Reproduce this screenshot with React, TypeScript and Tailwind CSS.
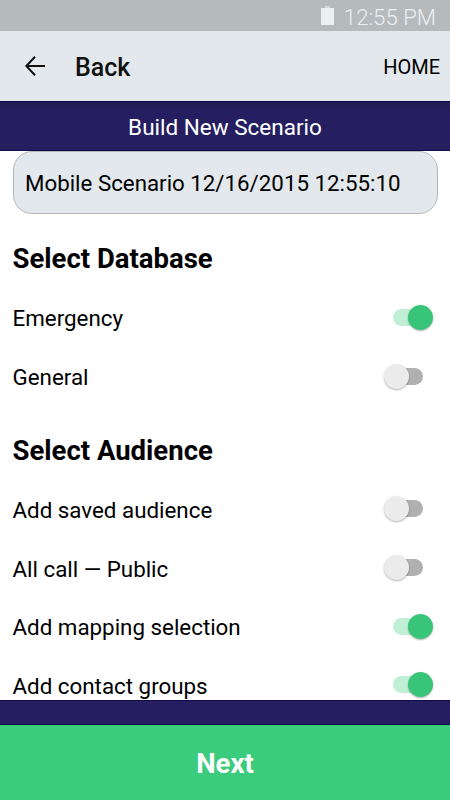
import { useState } from "react";

type ToggleRowProps = {
  label: string;
  defaultOn?: boolean;
};

function ToggleRow({ label, defaultOn = false }: ToggleRowProps) {
  const [on, setOn] = useState(defaultOn);

  return (
    <div className="flex h-[58.7px] shrink-0 items-center justify-between pl-[12.5px] pr-[17px]">
      <span className="text-[22.35px] leading-[26px] text-black">{label}</span>
      <button
        type="button"
        role="switch"
        aria-checked={on}
        aria-label={label}
        className="relative mb-[2px] flex h-[25px] w-[50px] items-center"
        onClick={() => setOn(!on)}
      >
        <span className={`mx-auto h-[17px] w-[30px] rounded-full ${on ? "bg-[#c1efd5]" : "bg-[#b0b0b0]"}`} />
        <span
          className={`absolute top-0 size-[25px] rounded-full shadow-[0_1px_2px_rgba(0,0,0,0.3)] ${
            on ? "right-0 bg-[#39c579]" : "left-[0.5px] bg-[#ebebeb]"
          }`}
        />
      </button>
    </div>
  );
}

export default function App() {
  const [name, setName] = useState("Mobile Scenario 12/16/2015 12:55:10");

  return (
    <div className="flex h-[800px] w-[450px] flex-col overflow-hidden bg-white font-[Roboto,sans-serif]">
      {/* status bar */}
      <div className="flex h-[31px] shrink-0 items-center justify-end bg-[#b5babd] pr-[14px] text-[#eceff1]">
        <svg width="13" height="19" viewBox="0 0 13 19" className="mr-[10px]" fill="currentColor">
          <path d="M4 0h5v2H4z" opacity=".6" />
          <path d="M0 2h13v17H0z" />
        </svg>
        <span className="pt-[2px] text-[22.2px] font-light leading-[28px]">12:55 PM</span>
      </div>

      {/* header */}
      <header className="flex h-[70px] shrink-0 items-center bg-[#e3e8ec] pl-[25px] pr-[10px]">
        <svg width="20" height="20" viewBox="0 0 20 20" fill="none" stroke="#111" strokeWidth="2">
          <path d="M10 .8 1.3 10l8.7 9.2M1.5 10H20" />
        </svg>
        <span className="ml-[30px] pt-[3px] text-[25px] font-medium leading-[30px] text-[#111]">Back</span>
        <span className="ml-auto pt-px text-[20px] leading-[24px] text-black">HOME</span>
      </header>

      <div className="flex h-[50px] shrink-0 items-center justify-center border-y border-[#100c45] bg-linear-to-b from-[#201c50] to-[#251f61] to-20% pt-[3px] text-[22.5px] text-white">
        Build New Scenario
      </div>

      <main className="flex h-[549px] shrink-0 flex-col overflow-hidden">
        <div className="shrink-0 px-[12.5px]">
          <input
            value={name}
            onChange={(e) => setName(e.target.value)}
            className="block h-[62.5px] w-full rounded-[19px] border border-[#b4b8bc] bg-[#e3e8ec] px-[11.5px] pt-px text-[22.3px] text-black outline-none"
          />
        </div>

        <h2 className="mt-[29.5px] shrink-0 pl-[12.5px] text-[27.5px] font-bold leading-[32px] text-black">Select Database</h2>
        <div className="mt-[14px]">
          <ToggleRow label="Emergency" defaultOn />
          <ToggleRow label="General" />
        </div>

        <h2 className="mt-[28.5px] shrink-0 pl-[12.5px] text-[27.5px] font-bold leading-[32px] text-black">Select Audience</h2>
        <div className="mt-[13.7px]">
          <ToggleRow label="Add saved audience" />
          <ToggleRow label="All call — Public" />
          <ToggleRow label="Add mapping selection" defaultOn />
          <ToggleRow label="Add contact groups" defaultOn />
        </div>
      </main>

      <div className="h-[25px] shrink-0 border-y border-[#100c45] bg-[#251f61]" />
      <button type="button" className="h-[75px] shrink-0 bg-[#3bcb7c] pt-[3px] text-[27.5px] font-bold text-white">
        Next
      </button>
    </div>
  );
}
